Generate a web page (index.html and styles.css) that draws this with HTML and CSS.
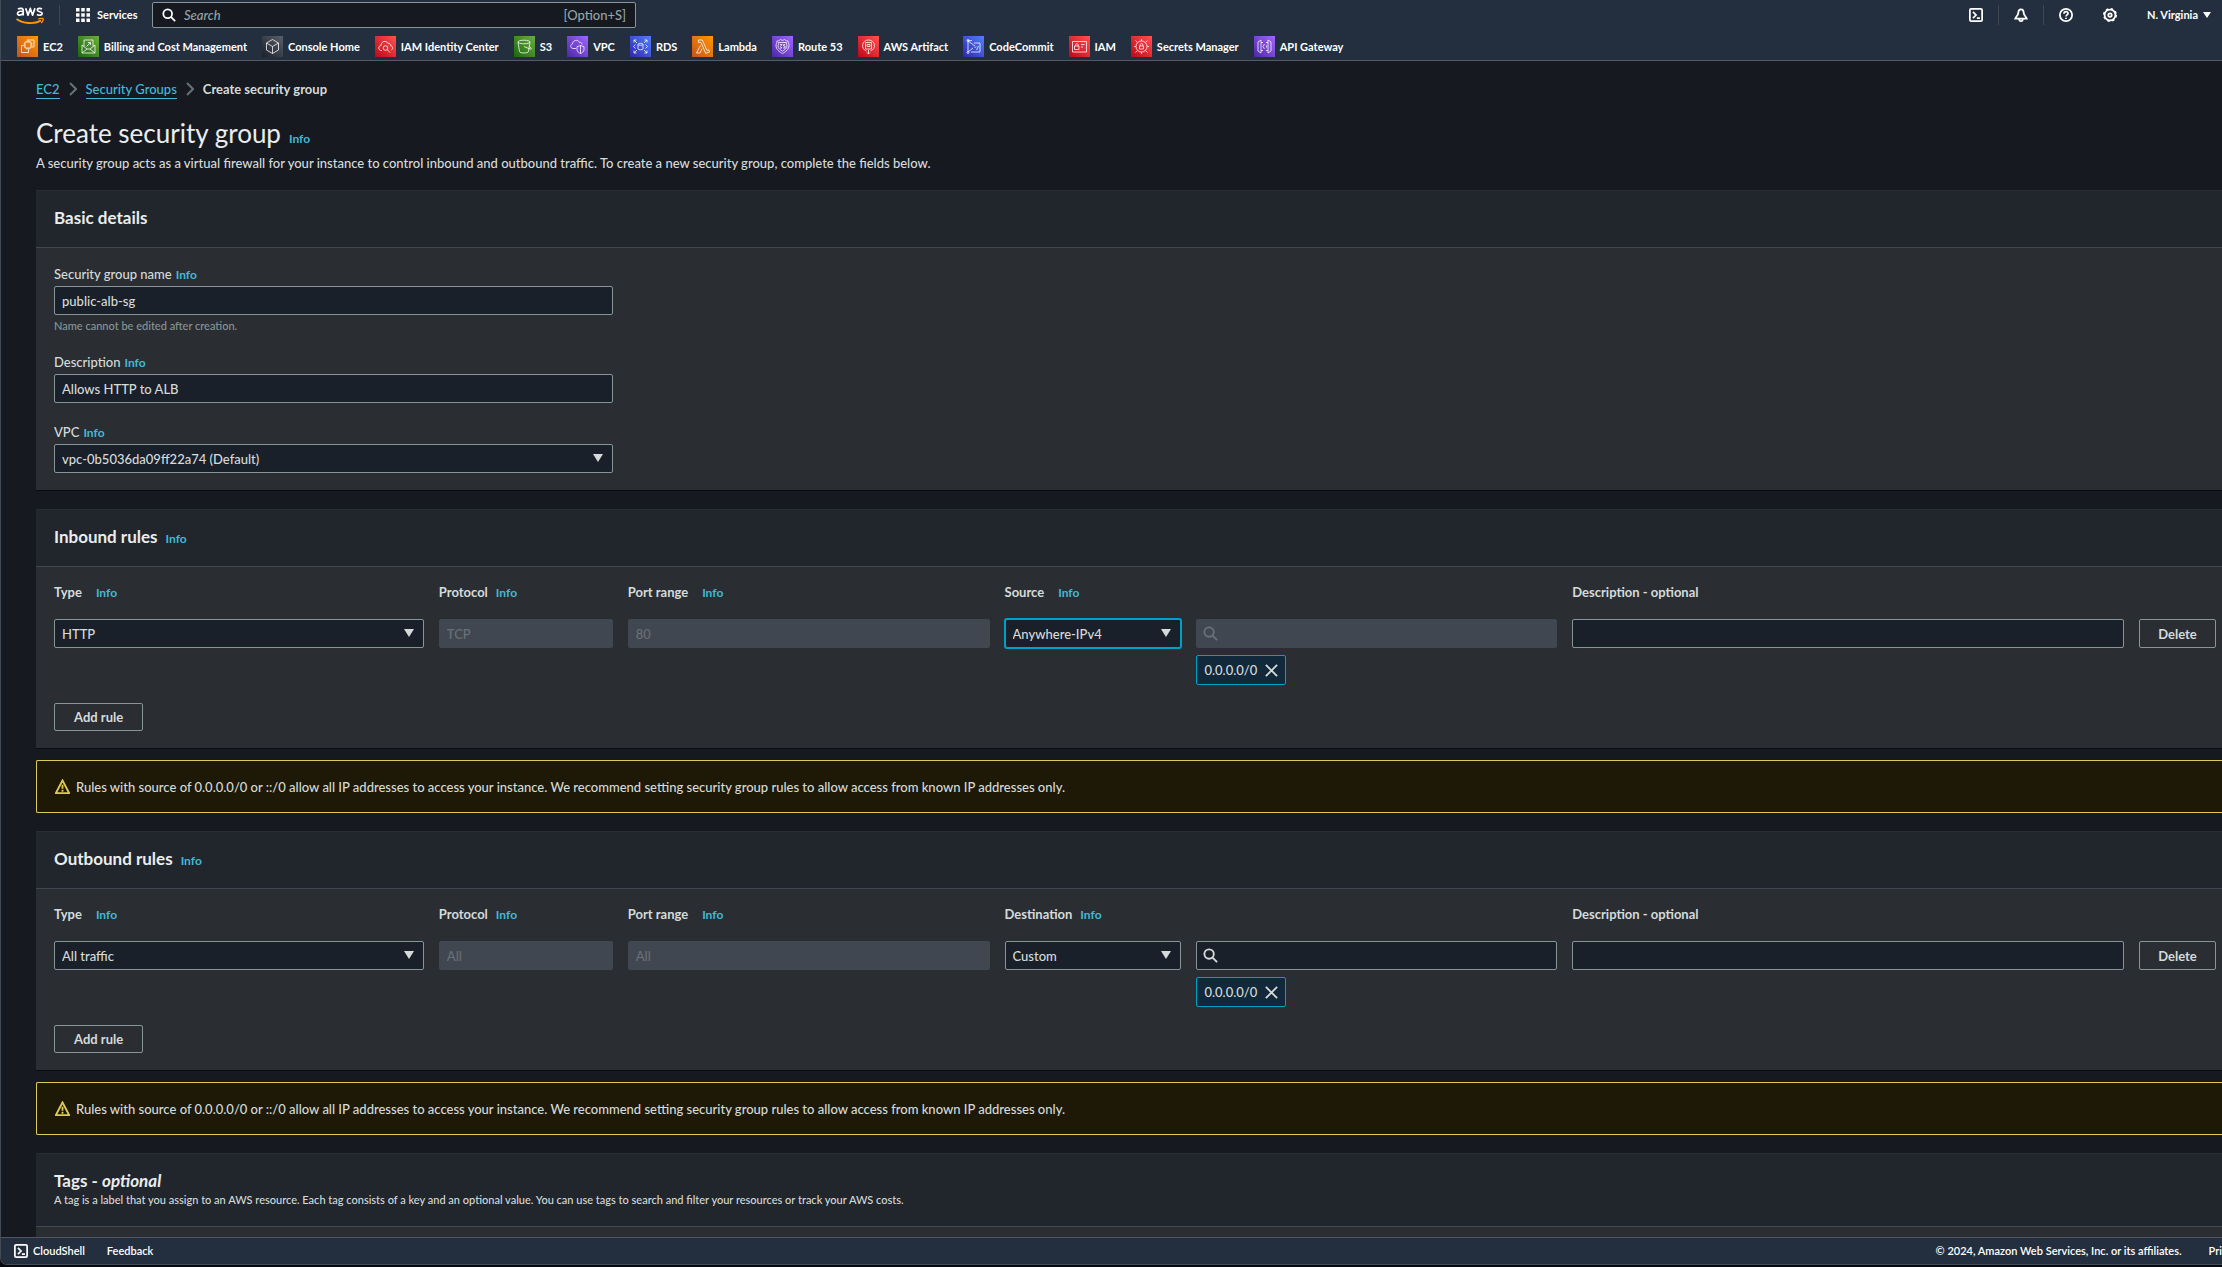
FILE: index.html
```
<!DOCTYPE html>
<html lang="en">
<head>
<meta charset="utf-8">
<meta name="viewport" content="width=device-width, initial-scale=1">
<title>Create security group</title>
<link rel="stylesheet" href="styles.css">
</head>
<body>
<svg class="sprite" aria-hidden="true">
  <symbol id="i-search" viewBox="0 0 16 16"><circle cx="6.5" cy="6.5" r="5"/><path d="M10.2 10.2 15 15"/></symbol>
  <symbol id="i-shell" viewBox="0 0 16 16"><rect x="1" y="1" width="14" height="14" rx="1.5"/><path d="M4.5 4.5 8 8l-3.500 3.500M9 11.500h3.500"/></symbol>
  <symbol id="i-warn" viewBox="0 0 16 16"><path d="M8 1.500 15 15H1zM8 6v4.500M8 11.500v2"/></symbol>
  <symbol id="i-close" viewBox="0 0 16 16"><path d="m2 2 12 12M14 2 2 14"/></symbol>
</svg>
<div class="shell">
  <header class="header">
    <div class="topbar">
      <a class="logo" href="#" aria-label="AWS">
        <svg viewBox="0 0 28 20" aria-hidden="true">
          <g fill="none" stroke="#fff" stroke-width="1.700" stroke-linejoin="round">
            <path d="M2 4.200C3.500 3 7.200 2.800 7.200 5.400V10.500M7.200 6.600C4.500 5.900 1.500 6.300 1.500 8.400C1.500 11 5.800 10.500 7.200 8.300"/>
            <path d="M9.700 3.200 12 10.200 14.300 3.400 16.600 10.200 18.900 3.200"/>
            <path d="M26 3.900C24.200 2.900 21.300 3.100 21.300 5C21.300 7.200 26.200 6.200 26.200 8.500C26.200 10.600 22.800 10.600 20.900 9.600"/>
          </g>
          <path d="M.5 14C7.500 18.800 18 19.300 25 15.600" fill="none" stroke="#f90" stroke-width="1.800"/>
          <path d="M22.200 14.200C24.200 13.100 27 13.100 27.200 13.700C27.500 14.500 26.500 17 25.200 18" fill="none" stroke="#f90" stroke-width="1.300"/>
        </svg>
      </a>
      <span class="rule"></span>
      <button class="services" type="button">
        <svg viewBox="0 0 14 14" aria-hidden="true"><path d="M0 0h3.500v3.500H0zM5.250 0h3.500v3.500h-3.500zM10.500 0H14v3.500h-3.500zM0 5.250h3.500v3.500H0zM5.250 5.250h3.500v3.500h-3.500zM10.500 5.250H14v3.500h-3.500zM0 10.500h3.500V14H0zM5.250 10.500h3.500V14h-3.500zM10.500 10.500H14V14h-3.500z" fill="#fff"/></svg>
        Services
      </button>
      <div class="search">
        <svg class="line" aria-hidden="true"><use href="#i-search"/></svg>
        <input type="search" placeholder="Search" aria-label="Search">
        <kbd>[Option+S]</kbd>
      </div>
      <div class="tools">
        <button type="button" aria-label="CloudShell"><svg class="line" aria-hidden="true"><use href="#i-shell"/></svg></button>
        <span class="rule"></span>
        <button type="button" aria-label="Notifications"><svg class="line" viewBox="0 0 16 16" aria-hidden="true"><path d="M8 1.500C5.500 1.500 4.800 4 4.800 6.500C4.500 8.500 2.500 9.500 1.500 12H14.500C13.500 9.500 11.500 8.500 11.200 6.500C11.200 4 10.500 1.500 8 1.500zM6 12v1.500C6 15.500 10 15.500 10 13.500V12"/></svg></button>
        <span class="rule"></span>
        <button type="button" aria-label="Help"><svg class="line" viewBox="0 0 16 16" aria-hidden="true"><circle cx="8" cy="8" r="7"/><path d="M5.700 6.500C5.700 3.400 10.400 3.500 10.300 6.300C10.200 7.900 8 7.900 8 9.800M8 11v1.700"/></svg></button>
        <button type="button" aria-label="Settings"><svg class="line" viewBox="0 0 16 16" aria-hidden="true"><circle cx="8" cy="8" r="6.200"/><circle cx="8" cy="8" r="7" stroke-width="2" stroke-dasharray="2.750 2.750"/><circle cx="8" cy="8" r="2"/></svg></button>
        <button class="region" type="button">N. Virginia <span class="caret"></span></button>
      </div>
    </div>
    <nav class="favorites" aria-label="Favorites">
      <a href="#"><svg class="orange" viewBox="0 0 21 21" aria-hidden="true"><path d="M8 6h6v6H8zM10 6V4.500M12 6V4.500M10 13.500V12M12 13.500V12M6.500 8H8M6.500 10H8M14 8h1.500M14 10h1.500M10 4h7v7h-2M6.500 9.500h-2v7h7v-3"/></svg>EC2</a>
      <a href="#"><svg class="green" viewBox="0 0 21 21" aria-hidden="true"><path d="M4 9v8h13V9M4 17l5-4h3l5 4M4 9l5 4M17 9l-5 4M6 10.500V4h9v6.500M8.500 10.500l4-4M10 6.500h2.500V9"/></svg>Billing and Cost Management</a>
      <a href="#"><svg class="gray" viewBox="0 0 21 21" aria-hidden="true"><path d="M10.500 3.500 16.500 7v7l-6 3.500-6-3.500V7zM4.500 7l6 3.500 6-3.500M10.500 10.500v7"/></svg>Console Home</a>
      <a href="#"><svg class="red" viewBox="0 0 21 21" aria-hidden="true"><path d="M7 14.500H6C3 14 3 10 6 9.500C6 5 11.500 4 13 7.500C15 6.500 15.500 8.500 15.500 9.500C18 10 18 13 16.500 14"/><circle cx="10.500" cy="12" r="2.300"/><path d="m12.200 13.700 3 3"/></svg>IAM Identity Center</a>
      <a href="#"><svg class="green" viewBox="0 0 21 21" aria-hidden="true"><ellipse cx="10" cy="6" rx="6" ry="1.800"/><path d="M4 6l1.500 9.500C6 17.500 14 17.500 14.500 15.500L16 6M10 10.500l6 2.500C18.500 13.500 17 11.500 15.500 10.500"/></svg>S3</a>
      <a href="#"><svg class="purple" viewBox="0 0 21 21" aria-hidden="true"><path d="M9 12.500H6C3 12 3 8.500 5.500 8C5.500 4 11 3 12.500 6.500C14.500 6 15 7.500 15 8.500M13.500 9.500l3.500 1.200v3C17 15.500 15 17 13.500 17.500C12 17 10 15.500 10 13.700v-3zM13.500 9.500v8"/></svg>VPC</a>
      <a href="#"><svg class="blue" viewBox="0 0 21 21" aria-hidden="true"><path d="M4 6.500V4h2.500M4 4l3 3M14.500 4H17v2.500M17 4l-3 3M4 14.500V17h2.500M4 17l3-3M14.500 17H17v-2.500M17 17l-3-3M5.500 8.500l-2 2 2 2M15.500 8.500l2 2-2 2M8 8.500v4.500C8 14 13 14 13 13V8.500"/><ellipse cx="10.500" cy="8.300" rx="2.500" ry="1"/></svg>RDS</a>
      <a href="#"><svg class="orange" viewBox="0 0 21 21" aria-hidden="true"><path d="M6.500 4h3.800l4.700 10.500 1.800-.7.700 2.200-3.800 1.300L9 6.500H6.500zM8.500 9.500 4.500 17H8l2-4.500"/></svg>Lambda</a>
      <a href="#"><svg class="purple" viewBox="0 0 21 21" aria-hidden="true"><path d="M5 5C7 5 8 4 8.500 3.500C9.500 4.500 11.500 4.500 12.500 3.500C13 4 14 5 16 5C16 7 17 7.500 17 9.500C17 13.500 13.500 16 10.500 17.500C7.500 16 4 13.500 4 9.500C4 7.500 5 7 5 5z"/><path d="M6.500 6.500h8C14 8.500 15 8.500 15 10C15 12.500 12.500 14 10.500 15.200C8.500 14 6 12.500 6 10C6 8.500 7 8.500 6.500 6.500zM8 8.500h2L8.500 10.500l1.500 1.500H8M13 8.500h-1.500V10H13v2h-2"/></svg>Route 53</a>
      <a href="#"><svg class="red" viewBox="0 0 21 21" aria-hidden="true"><path d="M8.500 15C2.500 13 3.500 4 10.500 4S18.500 13 12.500 15M10.500 14v4M9 16.500l1.500 1.500 1.500-1.500M7.500 6.500h6V13h-6zM9 8.500h3v2H9z"/></svg>AWS Artifact</a>
      <a href="#"><svg class="blue" viewBox="0 0 21 21" aria-hidden="true"><path d="M5 4v12M5 5l7 5M5 16l5-4M11 7h6v9H8M13 10.500l-1.500 1.500M15.500 10l-2 4M5 5l4-.5"/><circle cx="5" cy="4.500" r="1"/><circle cx="5" cy="16.500" r="1"/></svg>CodeCommit</a>
      <a href="#"><svg class="red" viewBox="0 0 21 21" aria-hidden="true"><path d="M3.500 5.500h14v10.500h-14zM5.500 10h4.500v3.500H5.500zM6.500 10V8.500C6.500 7.500 9 7.500 9 8.500V10M12 8.500h3.500M12 11h2"/></svg>IAM</a>
      <a href="#"><svg class="red" viewBox="0 0 21 21" aria-hidden="true"><circle cx="10.500" cy="10.500" r="5.500"/><path d="M8.500 10h4v3h-4zM9.200 10V8.500C9.200 7.300 11.800 7.300 11.800 8.500V10M4.500 4.500l2 2M16.500 4.500l-2 2M4.500 16.500l2-2M16.500 16.500l-2-2M3 10.500h2M16 10.500h2M10.500 3v2M10.500 16v2"/></svg>Secrets Manager</a>
      <a href="#"><svg class="purple" viewBox="0 0 21 21" aria-hidden="true"><path d="M4 6l3-2v13l-3-2zM17 6l-3-2v13l3-2zM7 6.500h2M12 6.500h2M7 14.500h2M12 14.500h2M10.500 8l-1.500 2.500 1.500 2.500M12.500 9.500v2"/></svg>API Gateway</a>
    </nav>
  </header>

  <main class="content">
    <nav class="breadcrumbs" aria-label="Breadcrumbs">
      <a href="#">EC2</a>
      <svg viewBox="0 0 8 14" aria-hidden="true"><path d="M1 1l6 6-6 6"/></svg>
      <a href="#">Security Groups</a>
      <svg viewBox="0 0 8 14" aria-hidden="true"><path d="M1 1l6 6-6 6"/></svg>
      <span>Create security group</span>
    </nav>
    <div class="title">
      <h1>Create security group</h1>
      <a class="info" href="#">Info</a>
    </div>
    <p class="intro">A security group acts as a virtual firewall for your instance to control inbound and outbound traffic. To create a new security group, complete the fields below.</p>

    <section class="panel">
      <div class="panel-head"><h2>Basic details</h2></div>
      <div class="panel-body details">
        <div class="field">
          <div class="label"><label for="name">Security group name</label><a class="info" href="#">Info</a></div>
          <input class="box" id="name" type="text" value="public-alb-sg">
          <p class="hint">Name cannot be edited after creation.</p>
        </div>
        <div class="field">
          <div class="label"><label for="desc">Description</label><a class="info" href="#">Info</a></div>
          <input class="box" id="desc" type="text" value="Allows HTTP to ALB">
        </div>
        <div class="field">
          <div class="label"><label for="vpc">VPC</label><a class="info" href="#">Info</a></div>
          <div class="select"><select class="box" id="vpc"><option>vpc-0b5036da09ff22a74 (Default)</option></select></div>
        </div>
      </div>
    </section>

    <section class="panel">
      <div class="panel-head"><h2>Inbound rules</h2><a class="info" href="#">Info</a></div>
      <div class="panel-body">
        <div class="rules">
          <div class="column-label"><label for="in-type">Type</label><a class="info" href="#">Info</a></div>
          <div class="column-label tight"><label for="in-protocol">Protocol</label><a class="info" href="#">Info</a></div>
          <div class="column-label"><label for="in-port">Port range</label><a class="info" href="#">Info</a></div>
          <div class="column-label wide"><label for="in-source">Source</label><a class="info" href="#">Info</a></div>
          <div class="column-label last"><label for="in-desc">Description - optional</label></div>
          <div class="select"><select class="box" id="in-type"><option>HTTP</option></select></div>
          <input class="box" id="in-protocol" type="text" value="TCP" disabled>
          <input class="box" id="in-port" type="text" value="80" disabled>
          <div class="select"><select class="box focused" id="in-source"><option>Anywhere-IPv4</option></select></div>
          <div class="cidr">
            <div class="lookup disabled"><svg class="line" aria-hidden="true"><use href="#i-search"/></svg><input class="box" type="text" aria-label="Source CIDR" disabled></div>
            <span class="token">0.0.0.0/0<button type="button" aria-label="Remove 0.0.0.0/0"><svg class="line" aria-hidden="true"><use href="#i-close"/></svg></button></span>
          </div>
          <input class="box" id="in-desc" type="text">
          <button class="button" type="button">Delete</button>
        </div>
        <button class="button add" type="button">Add rule</button>
      </div>
    </section>
    <div class="alert" role="status"><svg class="line" aria-hidden="true"><use href="#i-warn"/></svg>Rules with source of 0.0.0.0/0 or ::/0 allow all IP addresses to access your instance. We recommend setting security group rules to allow access from known IP addresses only.</div>

    <section class="panel">
      <div class="panel-head"><h2>Outbound rules</h2><a class="info" href="#">Info</a></div>
      <div class="panel-body">
        <div class="rules">
          <div class="column-label"><label for="out-type">Type</label><a class="info" href="#">Info</a></div>
          <div class="column-label tight"><label for="out-protocol">Protocol</label><a class="info" href="#">Info</a></div>
          <div class="column-label"><label for="out-port">Port range</label><a class="info" href="#">Info</a></div>
          <div class="column-label tight wide"><label for="out-dest">Destination</label><a class="info" href="#">Info</a></div>
          <div class="column-label last"><label for="out-desc">Description - optional</label></div>
          <div class="select"><select class="box" id="out-type"><option>All traffic</option></select></div>
          <input class="box" id="out-protocol" type="text" value="All" disabled>
          <input class="box" id="out-port" type="text" value="All" disabled>
          <div class="select"><select class="box" id="out-dest"><option>Custom</option></select></div>
          <div class="cidr">
            <div class="lookup"><svg class="line" aria-hidden="true"><use href="#i-search"/></svg><input class="box" type="text" aria-label="Destination CIDR"></div>
            <span class="token">0.0.0.0/0<button type="button" aria-label="Remove 0.0.0.0/0"><svg class="line" aria-hidden="true"><use href="#i-close"/></svg></button></span>
          </div>
          <input class="box" id="out-desc" type="text">
          <button class="button" type="button">Delete</button>
        </div>
        <button class="button add" type="button">Add rule</button>
      </div>
    </section>
    <div class="alert" role="status"><svg class="line" aria-hidden="true"><use href="#i-warn"/></svg>Rules with source of 0.0.0.0/0 or ::/0 allow all IP addresses to access your instance. We recommend setting security group rules to allow access from known IP addresses only.</div>

    <section class="panel">
      <div class="panel-head stacked">
        <h2>Tags - <em>optional</em></h2>
        <p>A tag is a label that you assign to an AWS resource. Each tag consists of a key and an optional value. You can use tags to search and filter your resources or track your AWS costs.</p>
      </div>
      <div class="panel-body"></div>
    </section>
  </main>

  <footer class="footer">
    <a class="cloudshell" href="#"><svg class="line" aria-hidden="true"><use href="#i-shell"/></svg>CloudShell</a>
    <a href="#">Feedback</a>
    <span class="copyright">© 2024, Amazon Web Services, Inc. or its affiliates.</span>
    <a href="#">Pri</a>
  </footer>
</div>
</body>
</html>
```
FILE: styles.css
```
* { box-sizing: border-box; }

body {
  margin: 0;
  background: #07090e;
  color: #d5dbdb;
  font: 500 13px/18px Lato, "Noto Sans", sans-serif;
}

h1, h2, p { margin: 0; }
a { color: inherit; text-decoration: none; }
button, input, select, kbd { font: inherit; color: inherit; }
button { padding: 0; border: 0; background: none; cursor: pointer; }

.sprite { display: none; }

.line {
  flex: none;
  width: 14px;
  height: 14px;
  overflow: visible;
  fill: none;
  stroke: currentColor;
  stroke-width: 2;
}

.shell {
  display: flex;
  flex-direction: column;
  height: calc(100vh - 2px);
  overflow: hidden;
  border: solid #414a55;
  border-width: 0 0 1px 1px;
  border-bottom-left-radius: 7px;
  background: #161920;
}

/* Header */
.header {
  flex: none;
  border-bottom: 1px solid #545b64;
  background: #232f3e;
  color: #fff;
  font-size: 11px;
  font-weight: 700;
  white-space: nowrap;
}

.topbar {
  display: flex;
  align-items: center;
  height: 30px;
  padding: 0 11px 0 15px;
}

.logo, .logo svg { display: block; width: 28px; height: 20px; }
.rule { width: 1px; height: 20px; background: #414750; }
.topbar > .rule { margin: 0 16px 0 15px; }

.services { display: flex; align-items: center; gap: 7px; width: 76px; }
.services svg { width: 14px; height: 14px; }

.search {
  display: flex;
  align-items: center;
  gap: 8px;
  width: 484px;
  height: 26px;
  padding: 0 9px 0 9px;
  border: 1px solid #879596;
  border-radius: 2px;
  background: #161920;
  font-size: 13px;
  font-weight: 500;
}
.search .line { stroke-width: 2; }
.search input {
  flex: 1;
  min-width: 0;
  padding: 0;
  border: 0;
  outline: 0;
  background: none;
}
.search input::placeholder { color: #95a5a6; font-style: italic; opacity: 1; }
.search kbd { color: #95a5a6; }

.tools { display: flex; align-items: center; gap: 15px; margin-left: auto; }
.tools button { display: flex; align-items: center; }
.tools button + button { margin-left: 15px; }
.tools .region { gap: 5px; }
.caret {
  border: solid transparent;
  border-width: 6px 4px 0;
  border-top-color: #fff;
}

.favorites { display: flex; gap: 15px; height: 30px; padding: 6px 16px 0; }
.favorites a { display: flex; align-items: center; gap: 5px; height: 21px; }
.favorites svg {
  width: 21px;
  height: 21px;
  fill: none;
  stroke: #fff;
  stroke-opacity: .85;
  stroke-width: .9;
}
.orange { background: linear-gradient(45deg, #c8511b, #ff9900); }
.green { background: linear-gradient(45deg, #1b660f, #6cae3e); }
.gray { background: linear-gradient(45deg, #1a1f27, #5a616c); }
.red { background: linear-gradient(45deg, #bd0816, #ff5252); }
.purple { background: linear-gradient(45deg, #4d27a8, #a166ff); }
.blue { background: linear-gradient(45deg, #2e27ad, #527fff); }

/* Page */
.content {
  flex: 1;
  min-height: 0;
  padding: 19px 0 18px 35px;
  overflow-y: auto;
  scrollbar-width: none;
}

.breadcrumbs { display: flex; align-items: center; gap: 9px; height: 18px; }
.breadcrumbs a { border-bottom: 1px solid #44b9d6; color: #44b9d6; }
.breadcrumbs span { font-weight: 700; }
.breadcrumbs svg {
  width: 8px;
  height: 14px;
  fill: none;
  stroke: #687078;
  stroke-width: 2;
}

.info { color: #44b9d6; font-size: 12px; font-weight: 700; line-height: 12px; }

.title { display: flex; align-items: baseline; gap: 8px; margin-top: 19px; }
h1 { color: #eaeded; font-size: 26px; font-weight: 400; line-height: 32px; }
.intro { margin-top: 5px; }

.panel {
  margin-top: 18px;
  border: solid #0b0d11;
  border-width: 1px 0 1px;
  border-top-color: #2a2e33;
  background: #2a2e33;
}
.panel-head {
  display: flex;
  align-items: baseline;
  gap: 8px;
  padding: 17px 18px 19px;
  border-bottom: 1px solid #414750;
  background: #21252c;
}
h2 { color: #eaeded; font-size: 17px; font-weight: 700; line-height: 20px; }
.stacked { display: block; padding-bottom: 17px; }
.stacked p { font-size: 11px; }
.panel-body { min-height: 40px; padding: 16px 6px 17px 18px; }
.details { display: grid; gap: 20px; padding-top: 17px; }

.field { width: 100%; max-width: 559px; }
.label { display: flex; align-items: baseline; gap: 4px; height: 18px; margin-bottom: 3px; }
.hint { margin-top: 3px; color: #879596; font-size: 11px; line-height: 15px; }

.box {
  display: block;
  width: 100%;
  min-width: 0;
  height: 29px;
  padding: 0 7px;
  border: 1px solid #879596;
  border-radius: 2px;
  outline: 0;
  background: #1a2029;
  appearance: none;
}
.box:disabled { border-color: #414750; background: #414750; color: #687078; opacity: 1; }
.focused { border-color: #00a1c9; box-shadow: 0 0 0 1px #00a1c9; }

.select { position: relative; min-width: 0; }
.select::after {
  position: absolute;
  top: 10px;
  right: 10px;
  border: solid transparent;
  border-width: 8px 5px 0;
  border-top-color: #d5dbdb;
  content: "";
  pointer-events: none;
}

/* Rule rows */
.rules {
  display: grid;
  grid-template-columns: 370fr 174fr 362fr 177fr 361fr 552fr 77px;
  align-items: start;
  gap: 18px 15px;
}
.column-label { display: flex; align-items: baseline; gap: 14px; height: 18px; font-weight: 700; }
.tight { gap: 8px; }
.wide, .last { grid-column: span 2; }

.lookup { display: grid; align-items: center; }
.lookup > * { grid-area: 1 / 1; }
.lookup .line { z-index: 1; width: 15px; height: 15px; margin-left: 7px; }
.lookup .box { padding-left: 30px; }
.disabled .line { color: #687078; }

.token {
  display: inline-flex;
  align-items: center;
  gap: 7px;
  height: 30px;
  margin-top: 7px;
  padding: 0 6px 0 7px;
  border: 1px solid #00a1c9;
  border-radius: 2px;
  background: #12293b;
  vertical-align: top;
}
.token button { display: flex; }
.token .line { width: 15px; height: 15px; }

.button {
  height: 29px;
  padding: 0 17px;
  border: 1px solid #879596;
  border-radius: 2px;
  font-weight: 700;
}
.add { height: 28px; margin-top: 18px; padding: 0 19px; }

.alert {
  display: flex;
  align-items: center;
  gap: 6px;
  min-height: 53px;
  margin-top: 11px;
  padding: 8px 18px;
  border: 1px solid #dfca58;
  border-right: 0;
  border-radius: 2px 0 0 2px;
  background: #1d1906;
}
.alert .line { width: 15px; height: 15px; stroke: #dfca58; }

/* Footer */
.footer {
  display: flex;
  flex: none;
  align-items: center;
  height: 27px;
  padding-left: 13px;
  overflow: hidden;
  border-top: 1px solid #4c5763;
  background: #232f3e;
  color: #fff;
  font-size: 11px;
  font-weight: 600;
  white-space: nowrap;
}
.cloudshell { display: flex; align-items: center; gap: 5px; margin-right: 22px; }
.copyright { margin: 0 27px 0 auto; }
```
